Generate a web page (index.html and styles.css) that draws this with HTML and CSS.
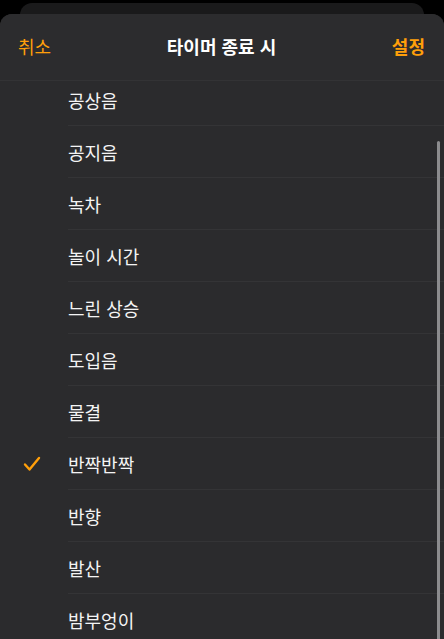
FILE: index.html
```html
<!DOCTYPE html>
<html lang="ko">
<head>
    <meta charset="UTF-8">
    <meta name="viewport" content="width=device-width, initial-scale=1.0">
    <title>타이머 종료 시</title>
    <link rel="stylesheet" href="styles.css">
</head>
<body>
    <div class="back-card"></div>
    <div class="sheet">
        <div class="header">
            <span class="action">취소</span>
            <span class="title">타이머 종료 시</span>
            <span class="action bold">설정</span>
        </div>
        <div class="list-wrap">
            <ul class="list">
                <li class="row"><span class="check"></span><span class="label">공상음</span></li>
                <li class="row"><span class="check"></span><span class="label">공지음</span></li>
                <li class="row"><span class="check"></span><span class="label">녹차</span></li>
                <li class="row"><span class="check"></span><span class="label">놀이 시간</span></li>
                <li class="row"><span class="check"></span><span class="label">느린 상승</span></li>
                <li class="row"><span class="check"></span><span class="label">도입음</span></li>
                <li class="row"><span class="check"></span><span class="label">물결</span></li>
                <li class="row selected">
                    <span class="check">
                        <svg width="18" height="16" viewBox="0 0 18 16"><path d="M2 8.5 L6.5 13.5 L16 2" fill="none" stroke="#ff9f0a" stroke-width="2.4" stroke-linecap="round" stroke-linejoin="round"/></svg>
                    </span>
                    <span class="label">반짝반짝</span>
                </li>
                <li class="row"><span class="check"></span><span class="label">반향</span></li>
                <li class="row"><span class="check"></span><span class="label">발산</span></li>
                <li class="row"><span class="check"></span><span class="label">밤부엉이</span></li>
            </ul>
            <div class="scrollbar"></div>
        </div>
    </div>
</body>
</html>
```

FILE: styles.css
```css
body {
    margin: 0;
    height: 639px;
    overflow: hidden;
    background-color: #000;
    font-family: "Noto Sans CJK KR", "Noto Sans", sans-serif;
    color: #fff;
}
.back-card {
    height: 20px;
    margin: 3px 20px 0;
    border-radius: 12px 12px 0 0;
    background-color: #1a1a1b;
}
.sheet {
    margin-top: -9px;
    height: 625px;
    border-radius: 12px 12px 0 0;
    background-color: #2b2b2d;
    overflow: hidden;
    display: flex;
    flex-direction: column;
}
.header {
    height: 66px;
    flex-shrink: 0;
    display: flex;
    align-items: center;
    justify-content: space-between;
    padding: 0 19px 0 18px;
    border-bottom: 1px solid #333335;
    position: relative;
    z-index: 1;
    background-color: #2c2c2e;
}
.action {
    font-size: 18px;
    color: #ff9f0a;
    padding-bottom: 2px;
}
.action.bold {
    font-weight: 700;
}
.title {
    font-size: 18px;
    font-weight: 700;
    padding-bottom: 2px;
}
.list-wrap {
    flex: 1;
    position: relative;
    overflow: hidden;
}
.list {
    list-style: none;
    margin: -7px 0 0;
    padding: 0;
}
.row {
    height: 52px;
    display: flex;
    align-items: center;
}
.check {
    width: 68px;
    flex-shrink: 0;
    display: flex;
    justify-content: flex-start;
    padding-left: 23px;
    box-sizing: border-box;
}
.check svg {
    display: block;
}
.label {
    flex: 1;
    height: 52px;
    line-height: 53px;
    font-size: 18px;
    color: #f4f4f4;
    border-bottom: 1px solid #343436;
    box-sizing: border-box;
}
.scrollbar {
    position: absolute;
    top: 60px;
    right: 4px;
    width: 3px;
    height: 600px;
    border-radius: 2px;
    background-color: #8c8c8e;
}
```
